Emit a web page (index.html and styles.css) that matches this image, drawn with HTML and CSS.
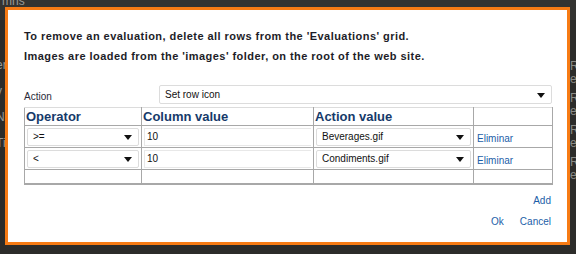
FILE: index.html
```html
<!DOCTYPE html>
<html>
<head>
<meta charset="utf-8">
<link rel="stylesheet" href="styles.css">
</head>
<body>
<div class="backdrop">
  <div class="bg-top"><span class="bg-t1">mns</span></div>
  <div class="bg-main">
    <div class="bg-left">
      <span class="bg-item">r</span>
      <span class="bg-item">er</span>
      <span class="bg-item">y</span>
      <span class="bg-item">N</span>
      <span class="bg-item">Ti</span>
    </div>
    <div class="bg-right">
      <span class="bg-item">Ro<br>ev</span>
      <span class="bg-item">Ro<br>ev</span>
      <span class="bg-item">Ro<br>ev</span>
      <span class="bg-item">Ro<br>ev</span>
    </div>
  </div>
</div>

<div class="dialog">
  <p class="note">To remove an evaluation, delete all rows from the 'Evaluations' grid.</p>
  <p class="note">Images are loaded from the 'images' folder, on the root of the web site.</p>

  <div class="action-row">
    <span class="label">Action</span>
    <div class="dd dd-action"><span>Set row icon</span><svg class="arrow" width="8" height="5" viewBox="0 0 8 5"><path d="M0 0H8L4 5Z" fill="#111"/></svg></div>
  </div>

  <table class="grid">
    <colgroup><col class="c1"><col class="c2"><col class="c3"><col class="c4"></colgroup>
    <thead>
      <tr><th>Operator</th><th>Column value</th><th>Action value</th><th></th></tr>
    </thead>
    <tbody>
      <tr>
        <td><div class="dd"><span>&gt;=</span><svg class="arrow" width="8" height="5" viewBox="0 0 8 5"><path d="M0 0H8L4 5Z" fill="#111"/></svg></div></td>
        <td><div class="inp">10</div></td>
        <td><div class="dd"><span>Beverages.gif</span><svg class="arrow" width="8" height="5" viewBox="0 0 8 5"><path d="M0 0H8L4 5Z" fill="#111"/></svg></div></td>
        <td><a class="link">Eliminar</a></td>
      </tr>
      <tr>
        <td><div class="dd"><span>&lt;</span><svg class="arrow" width="8" height="5" viewBox="0 0 8 5"><path d="M0 0H8L4 5Z" fill="#111"/></svg></div></td>
        <td><div class="inp">10</div></td>
        <td><div class="dd"><span>Condiments.gif</span><svg class="arrow" width="8" height="5" viewBox="0 0 8 5"><path d="M0 0H8L4 5Z" fill="#111"/></svg></div></td>
        <td><a class="link">Eliminar</a></td>
      </tr>
      <tr class="empty"><td></td><td></td><td></td><td></td></tr>
    </tbody>
  </table>

  <div class="add-row"><a class="link">Add</a></div>
  <div class="btn-row"><a class="link">Ok</a><a class="link">Cancel</a></div>
</div>
</body>
</html>
```

FILE: styles.css
```css
html, body {
  margin: 0;
  padding: 0;
}
body {
  width: 576px;
  height: 254px;
  overflow: hidden;
  background: #2c2c2a;
  font-family: "Liberation Sans", Arial, sans-serif;
  position: relative;
}
.backdrop {
  display: flex;
  flex-direction: column;
  height: 254px;
  color: #9a9a96;
  font-size: 12px;
}
.bg-top {
  height: 20px;
  background: #333331;
  line-height: 8px;
  padding-left: 2px;
}
.bg-t1 { display: block; margin-top: -3px; }
.bg-main {
  display: flex;
  justify-content: space-between;
  flex: 1;
}
.bg-left {
  display: flex;
  flex-direction: column;
  gap: 12px;
  padding-top: 12px;
  margin-left: -4px;
}
.bg-right {
  display: flex;
  flex-direction: column;
  gap: 6px;
  padding-top: 40px;
  line-height: 13px;
  width: 6px;
  overflow: hidden;
  color: #8a8a86;
}
.dialog {
  position: absolute;
  left: 5px;
  top: 7px;
  width: 559px;
  height: 232px;
  border: 3px solid #f77b14;
  background: #ffffff;
  padding: 0;
  box-sizing: content-box;
  display: flex;
  flex-direction: column;
  color: #1a1a2a;
}
.note {
  margin: 0 0 0 16px;
  font-size: 11px;
  font-weight: bold;
  letter-spacing: 0.45px;
  line-height: 20px;
  color: #1d1d28;
}
.note:first-child { margin-top: 16px; }
.action-row {
  display: flex;
  align-items: center;
  margin: 19px 0 0 16px;
  height: 19px;
}
.label {
  font-size: 10px;
  color: #2a2a38;
  width: 135px;
  padding-top: 4px;
}
.dd {
  display: flex;
  align-items: center;
  justify-content: space-between;
  border: 1px solid #dcdcdc;
  border-radius: 2px;
  box-sizing: border-box;
  height: 18px;
  padding: 0 6px 0 5px;
  font-size: 10px;
  color: #111;
  background: #fff;
}
.dd-action {
  width: 393px;
  height: 19px;
  padding-left: 5px;
  padding-right: 6px;
}
.arrow { flex: none; margin-top: 1px; }
.grid {
  margin: 3px 0 0 16px;
  border-collapse: collapse;
  width: 528px;
  table-layout: fixed;
}
.c1 { width: 117px; }
.c2 { width: 172px; }
.c3 { width: 160px; }
.c4 { width: 79px; }
.grid th {
  text-align: left;
  font-size: 13px;
  font-weight: bold;
  color: #163a6a;
  height: 17px;
  padding: 0 0 0 1px;
  border: 1px solid #a8a8a8;
  border-top-color: #dcdcdc;
  line-height: 17px;
}
.grid td {
  border: 1px solid #a8a8a8;
  height: 21px;
  padding: 0 2px 0 2px;
  vertical-align: middle;
}
.grid tbody tr:last-child td { border-bottom: 2px solid #a8a8a8; }
.grid tr.empty td { height: 13px; }
.inp {
  border: 1px solid #e8e8e8;
  border-right: none;
  height: 18px;
  box-sizing: border-box;
  font-size: 10px;
  color: #111;
  line-height: 16px;
  padding-left: 2px;
}
.link {
  font-size: 10px;
  color: #1c5ea8;
  text-decoration: none;
  cursor: pointer;
}
.grid td .link { padding-left: 1px; }
.add-row {
  display: flex;
  justify-content: flex-end;
  margin: 9px 16px 0 0;
  line-height: 14px;
}
.btn-row {
  display: flex;
  justify-content: flex-end;
  gap: 16px;
  margin: 7px 16px 0 0;
  line-height: 14px;
}
```
